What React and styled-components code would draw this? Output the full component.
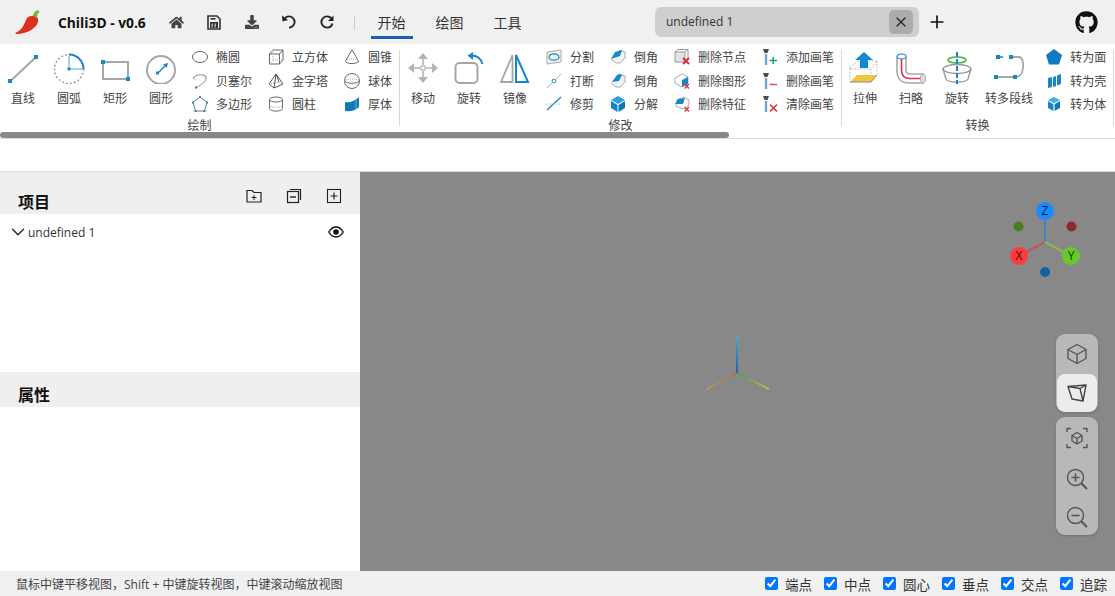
import React from "react";
import styled, { createGlobalStyle } from "styled-components";
import { FaGithub, FaHome, FaDownload } from "react-icons/fa";
import { X, Plus, ChevronDown } from "lucide-react";

const BLUE = "#1688c9";
const GREY = "#a6a6a6";
const DARK = "#555";

const GlobalStyle = createGlobalStyle`
  html, body {
    margin: 0;
    height: 100%;
    overflow: hidden;
  }
  body {
    font-family: "Open Sans", "Noto Sans CJK SC", sans-serif;
    color: #333;
    font-size: 12px;
  }
`;

const Page = styled.div`
  width: 1115px;
  height: 596px;
  display: flex;
  flex-direction: column;
  background: #fff;
`;

const TitleBar = styled.header`
  height: 44px;
  flex: none;
  display: flex;
  align-items: center;
  background: #f0f0f0;
`;

const TitleLeft = styled.div`
  flex: 0 0 655px;
  height: 100%;
  display: flex;
  align-items: center;
  padding-left: 14px;
  box-sizing: border-box;
`;

const AppName = styled.span`
  margin-left: 18px;
  width: 100px;
  font-size: 13.8px;
  font-weight: 700;
  color: #111;
  white-space: nowrap;
`;

const ToolButton = styled.div`
  width: 37.5px;
  height: 20px;
  display: flex;
  align-items: center;
  justify-content: center;
  color: #444;
`;

const VBar = styled.div`
  width: 1px;
  height: 15px;
  margin: 0 16px 0 8px;
  background: #ccc;
`;

const Tab = styled.div`
  width: 42px;
  height: 39px;
  box-sizing: border-box;
  margin-right: 16px;
  padding-top: 8px;
  align-self: flex-start;
  display: flex;
  align-items: center;
  justify-content: center;
  font-size: 14px;
  color: #333;
  border-bottom: 3px solid ${(p) => (p.$active ? "#1a5fb4" : "transparent")};
`;

const DocTab = styled.div`
  width: 264px;
  height: 30px;
  margin-top: -1px;
  box-sizing: border-box;
  padding: 0 6px 0 11px;
  display: flex;
  align-items: center;
  justify-content: space-between;
  background: #cfcfcf;
  border-radius: 6px;
  font-size: 12px;
  color: #333;
`;

const DocClose = styled.div`
  width: 24px;
  height: 24px;
  display: flex;
  align-items: center;
  justify-content: center;
  border-radius: 5px;
  background: #acacac;
  color: #222;
`;

const NewDoc = styled.div`
  margin-left: 8px;
  width: 20px;
  display: flex;
  justify-content: center;
  color: #111;
`;

const GithubLink = styled.div`
  margin-left: auto;
  margin-right: 17px;
  display: flex;
  color: #111;
`;

const Ribbon = styled.section`
  height: 86.5px;
  flex: none;
  padding-top: 1.5px;
  display: flex;
  align-items: flex-start;
  overflow: hidden;
`;

const Group = styled.div`
  display: flex;
  flex-direction: column;
  flex: none;
`;

const GroupBody = styled.div`
  display: flex;
  height: 70.5px;
  padding-right: 7px;
`;

const GroupLabel = styled.div`
  height: 16px;
  margin-top: 1.5px;
  line-height: 16px;
  text-align: center;
  color: #444;
`;

const GroupDivider = styled.div`
  width: 1px;
  height: 76px;
  margin-top: 4px;
  flex: none;
  background: #d8d8d8;
`;

const LargeButton = styled.div`
  min-width: 46px;
  box-sizing: border-box;
  padding: 6.5px 5px 0;
  display: flex;
  flex-direction: column;
  align-items: center;
  gap: 7px;
  svg {
    display: block;
  }
`;

const LargeLabel = styled.span`
  line-height: 16px;
  color: #444;
  white-space: nowrap;
`;

const SmallColumns = styled.div`
  display: flex;
  gap: 16px;
  margin-left: 8px;
`;

const SmallColumn = styled.div`
  display: flex;
  flex-direction: column;
`;

const SmallButton = styled.div`
  height: 23.5px;
  display: flex;
  align-items: center;
  gap: 8px;
  color: #444;
  white-space: nowrap;
  svg {
    flex: none;
  }
`;

const ScrollTrack = styled.div`
  height: 6px;
  flex: none;
  border-bottom: 1px solid #dcdcdc;
`;

const ScrollThumb = styled.div`
  width: 729px;
  height: 6px;
  border-radius: 3px;
  background: #888;
`;

const OptionBar = styled.div`
  height: 32px;
  flex: none;
  border-bottom: 1px solid #dcdcdc;
`;

const Main = styled.main`
  flex: 1;
  min-height: 0;
  display: flex;
`;

const SidePanel = styled.aside`
  width: 360px;
  flex: none;
  display: flex;
  flex-direction: column;
`;

const ProjectArea = styled.div`
  height: 200px;
  flex: none;
`;

const PanelHeader = styled.div`
  height: ${(p) => p.$height}px;
  box-sizing: border-box;
  padding: 0 18px 2px;
  display: flex;
  align-items: flex-end;
  background: #efefef;
`;

const PanelTitle = styled.h2`
  margin: 0;
  font-size: 16px;
  line-height: 20px;
  font-weight: 700;
  color: #111;
`;

const PanelTools = styled.div`
  margin-left: auto;
  align-self: flex-start;
  padding-top: 16px;
  display: flex;
  gap: 24px;
  svg {
    display: block;
  }
`;

const TreeRow = styled.div`
  height: 36px;
  padding: 0 16px 0 7px;
  display: flex;
  align-items: center;
  color: #333;
`;

const TreeName = styled.span`
  margin-left: -1px;
  flex: 1;
`;

const Viewport = styled.div`
  flex: 1;
  position: relative;
  background: #888;
  overflow: hidden;
`;

const Gizmo = styled.svg`
  position: absolute;
  right: 15px;
  top: 25px;
`;

const Axes = styled.svg`
  position: absolute;
  left: 340px;
  top: 160px;
`;

const NavStack = styled.div`
  position: absolute;
  right: 17px;
  top: 162px;
  display: flex;
  flex-direction: column;
  gap: 5px;
`;

const NavPanel = styled.div`
  width: 42px;
  border-radius: 9px;
  background: #b8b8b8;
  box-shadow: 0 1px 3px rgba(0, 0, 0, 0.18);
  display: flex;
  flex-direction: column;
  align-items: center;
  overflow: hidden;
`;

const NavButton = styled.div`
  width: 40px;
  height: ${(p) => p.$h}px;
  display: flex;
  align-items: center;
  justify-content: center;
  border-radius: 8px;
  background: ${(p) => (p.$active ? "#ececec" : "transparent")};
`;

const StatusBar = styled.footer`
  height: 25px;
  flex: none;
  display: flex;
  align-items: center;
  padding: 0 8px 0 16px;
  background: #f0f0f0;
  color: #444;
`;

const Hint = styled.span`
  font-size: 12px;
  flex: 1;
`;

const Snap = styled.label`
  display: flex;
  align-items: center;
  gap: 7px;
  margin-left: 12px;
  font-size: 13.5px;
  color: #333;
  input {
    margin: 0;
    width: 13px;
    height: 13px;
  }
`;

const Svg = ({ s = 16, children }) => (
  <svg width={s} height={s} viewBox={`0 0 ${s} ${s}`} fill="none">
    {children}
  </svg>
);

const Logo = () => (
  <svg width="26" height="26" viewBox="0 0 26 26">
    <path
      d="M18 7C22 6 25 9 24 13C22 20 12 25 3 25C1 25 1 24 2 23.5C8 21 10 16 12 11C13 8 15 7 18 7Z"
      fill="#d9301f"
    />
    <path d="M19 7C19 4 21 2 24 1L25.5 3C23.5 4 23 6 23 9Z" fill="#7fb23a" />
  </svg>
);

const SaveIcon = () => (
  <svg width="14" height="15" viewBox="0 0 14 15" fill="none">
    <path d="M1 1H10L13 4V14H1Z" stroke="#333" strokeWidth="1.6" />
    <rect x="3" y="7" width="8" height="6" fill="#333" />
    <rect x="4.6" y="8.5" width="1" height="4" fill="#f0f0f0" />
    <rect x="7.6" y="8.5" width="1" height="4" fill="#f0f0f0" />
    <rect x="3.5" y="3" width="5" height="1.6" fill="#333" />
  </svg>
);

const UndoIcon = () => (
  <svg width="16" height="16" viewBox="0 0 16 16" fill="none">
    <path d="M4 4.2C5 3 6.5 2.4 8 2.4C11.2 2.4 13.6 5 13.6 8C13.6 11 11.2 13.6 8 13.6" stroke="#222" strokeWidth="1.9" />
    <path d="M1 1.5L1.5 7.5L7 6Z" fill="#222" />
  </svg>
);

const RedoIcon = () => (
  <svg width="16" height="16" viewBox="0 0 16 16" fill="none">
    <path d="M12.4 4.4C11.4 3.1 9.8 2.4 8 2.4C4.8 2.4 2.4 5 2.4 8C2.4 11 4.8 13.6 8 13.6C10.6 13.6 12.8 11.8 13.4 9.4" stroke="#222" strokeWidth="1.9" />
    <path d="M14.5 1.5L14.5 7H9Z" fill="#222" />
  </svg>
);

// large ribbon icons
const large = {
  line: (
    <Svg s={32}>
      <line x1="3" y1="29.5" x2="29" y2="5" stroke={GREY} strokeWidth="2" />
      <rect x="1" y="27" width="4" height="4" fill={BLUE} />
      <rect x="27" y="3" width="4" height="4" fill={BLUE} />
    </Svg>
  ),
  arc: (
    <Svg s={32}>
      <circle cx="16" cy="17" r="14.5" stroke="#8d8d8d" strokeWidth="1.6" strokeDasharray="1.6 2.4" />
      <path d="M16 2.5A14.5 14.5 0 0 1 30.5 17" stroke={BLUE} strokeWidth="2" />
      <path d="M16 3V17H30" stroke="#8cc6e6" strokeWidth="1.6" />
      <rect x="14.5" y="15.5" width="3" height="3" fill={BLUE} />
    </Svg>
  ),
  rect: (
    <Svg s={32}>
      <rect x="4" y="10" width="25" height="17" stroke={GREY} strokeWidth="2" />
      <rect x="2" y="8" width="4" height="4" fill={BLUE} />
      <rect x="27" y="25" width="4" height="4" fill={BLUE} />
    </Svg>
  ),
  circle: (
    <Svg s={32}>
      <circle cx="16" cy="18" r="14" stroke={GREY} strokeWidth="2" />
      <line x1="13" y1="21" x2="20.5" y2="13.5" stroke={BLUE} strokeWidth="1.4" />
      <rect x="11" y="19.5" width="3" height="3" fill={BLUE} />
      <path d="M23 11L21.8 16L18 12.2Z" fill={BLUE} />
    </Svg>
  ),
  move: (
    <Svg s={32}>
      <path d="M16 1L21 7H11ZM16 31L11 25H21ZM1 16L7 11V21ZM31 16L25 21V11Z" fill="#b3b3b3" />
      <path d="M16 7V13M16 19V25M7 16H13M19 16H25" stroke="#c4c4c4" strokeWidth="2" />
      <rect x="14" y="14" width="4" height="4" stroke={GREY} />
    </Svg>
  ),
  rotate: (
    <Svg s={32}>
      <rect x="2.5" y="11" width="22" height="20" rx="4" stroke={GREY} strokeWidth="2" />
      <path d="M18 3.5C23.5 3 28 6.5 29.5 12" stroke={BLUE} strokeWidth="2" />
      <path d="M14.5 3.5L20 0V8Z" fill={BLUE} />
    </Svg>
  ),
  mirror: (
    <Svg s={32}>
      <path d="M13.5 3V30H2Z" stroke={GREY} strokeWidth="1.8" />
      <path d="M17 3V30H29Z" stroke={BLUE} strokeWidth="2" />
    </Svg>
  ),
  extrude: (
    <Svg s={32}>
      <path d="M1 15L9 9H28L22 17H1ZM1 17V30M22 17V30M28 9V22" stroke="#b5b5b5" strokeDasharray="1.5 1.5" />
      <path d="M1 30L8 23H28L22 30Z" fill="#f3c33c" />
      <path d="M1 30H22L28 23" stroke="#888" />
      <path d="M15 0L24 8H19V16H11V8H6Z" fill="#0d8ad6" />
    </Svg>
  ),
  sweep: (
    <Svg s={32}>
      <path d="M5 3C2 3 2 5 2 7V19C2 27 7 31 14 31H28V22H15C12 22 11 21 11 18V6C11 4 9 3 5 3Z" fill="#fff" stroke="#a9a9a9" strokeWidth="1.6" />
      <path d="M6.5 6V18C6.5 24 10 26.5 15 26.5H28" stroke="#e0324b" strokeWidth="1.6" />
      <ellipse cx="6.5" cy="4.5" rx="4.5" ry="2.5" fill="#fff" stroke={BLUE} strokeWidth="1.2" />
      <ellipse cx="28" cy="26.5" rx="2.5" ry="4.5" fill="#ddd" stroke="#a9a9a9" />
    </Svg>
  ),
  revolve: (
    <Svg s={32}>
      <ellipse cx="16" cy="17" rx="14" ry="4.5" stroke="#999" strokeWidth="1.4" />
      <path d="M2 17L5 27C7 31 25 31 27 27L30 17" stroke="#999" strokeWidth="1.4" />
      <ellipse cx="16" cy="8" rx="9" ry="3" stroke="#4db848" strokeWidth="1.6" />
      <path d="M16 0V32" stroke={BLUE} strokeWidth="2" strokeDasharray="5 2" />
    </Svg>
  ),
  polyline: (
    <Svg s={32}>
      <path d="M4 25H23M19 5H26C32 5 32 25 23 25" stroke={GREY} strokeWidth="1.8" />
      <path d="M6 5H10" stroke={BLUE} strokeWidth="1.6" />
      <rect x="3" y="3" width="4" height="4" fill={BLUE} />
      <rect x="16" y="3" width="4" height="4" fill={BLUE} />
      <rect x="1" y="23" width="4" height="4" fill={BLUE} />
      <rect x="20" y="23" width="4" height="4" fill={BLUE} />
    </Svg>
  ),
};

// small ribbon icons
const small = {
  ellipse: (
    <Svg>
      <ellipse cx="8" cy="8" rx="7.5" ry="5.5" stroke="#666" />
    </Svg>
  ),
  bezier: (
    <Svg>
      <path d="M1 5C5 0 15 1 14 6C13 10 7 13 4 15" stroke="#888" />
      <path d="M1 5L4 7M12 2L15 4" stroke={BLUE} strokeDasharray="1 1" />
      <rect x="3" y="13.5" width="2" height="2" fill={BLUE} />
    </Svg>
  ),
  polygon: (
    <Svg>
      <path d="M8 1L15 6.5L12.5 15H3.5L1 6.5Z" stroke="#777" />
      <g fill={BLUE}>
        <rect x="7" y="0" width="2" height="2" />
        <rect x="0" y="5.5" width="2" height="2" />
        <rect x="14" y="5.5" width="2" height="2" />
        <rect x="2.5" y="14" width="2" height="2" />
        <rect x="11.5" y="14" width="2" height="2" />
      </g>
    </Svg>
  ),
  cube: (
    <Svg>
      <path d="M1.5 5H11.5V15H1.5ZM1.5 5L5 1H15V11L11.5 15M11.5 5L15 1" stroke="#666" />
      <path d="M5 1V11H15M5 11L1.5 15" stroke="#aaa" strokeDasharray="1 1" />
    </Svg>
  ),
  pyramid: (
    <Svg>
      <path d="M8 1L1 11L6 15L15 11ZM8 1L6 15M8 1L11 9" stroke="#555" />
      <path d="M1 11L11 9L15 11" stroke="#999" strokeDasharray="1 1" />
    </Svg>
  ),
  cylinder: (
    <Svg>
      <ellipse cx="8" cy="3.5" rx="6.5" ry="2.5" stroke="#666" />
      <path d="M1.5 3.5V12.5C1.5 16 14.5 16 14.5 12.5V3.5" stroke="#666" />
      <path d="M1.5 9C1.5 12 14.5 12 14.5 9" stroke="#aaa" strokeDasharray="1 1" />
    </Svg>
  ),
  cone: (
    <Svg>
      <path d="M8 1L1.5 12M8 1L14.5 12" stroke="#666" />
      <path d="M1.5 12C1.5 15.5 14.5 15.5 14.5 12" stroke="#666" />
      <path d="M1.5 12C1.5 9.5 14.5 9.5 14.5 12" stroke="#aaa" strokeDasharray="1 1" />
    </Svg>
  ),
  sphere: (
    <Svg>
      <circle cx="8" cy="8" r="7.5" stroke="#666" />
      <path d="M.5 8C3 11 13 11 15.5 8" stroke="#666" />
      <path d="M.5 8C3 5.5 13 5.5 15.5 8" stroke="#aaa" strokeDasharray="1 1" />
    </Svg>
  ),
  thick: (
    <Svg>
      <path d="M1 6C6 7 11 5 15 1V11C11 15 6 16 1 15Z" fill="#1378b8" />
      <path d="M12 3.5V13" stroke="#63b1de" />
    </Svg>
  ),
  split: (
    <Svg>
      <path d="M1 3L15 1V13L1 15Z" fill="#f1f1f1" stroke="#aaa" />
      <ellipse cx="8" cy="8" rx="5" ry="3.2" stroke={BLUE} strokeWidth="1.2" />
    </Svg>
  ),
  break: (
    <Svg>
      <path d="M1 15L6 10M10 6L15 1" stroke="#b5b5b5" />
      <circle cx="8" cy="8" r="2" stroke={BLUE} />
    </Svg>
  ),
  trim: (
    <Svg>
      <path d="M1 14L15 1" stroke={BLUE} strokeWidth="1.4" />
      <path d="M0 8H15" stroke="#bbb" strokeDasharray="1.5 1" />
    </Svg>
  ),
  chamfer: (
    <Svg>
      <path d="M1 10L6 14H10L15 9V3L9 1" fill="#f1f1f1" stroke="#aaa" />
      <path d="M1 10L5 3L12 1L10 7Z" fill="#1688c9" />
    </Svg>
  ),
  fillet: (
    <Svg>
      <path d="M1 10L6 14H10L15 9V3L9 1" fill="#f1f1f1" stroke="#aaa" />
      <path d="M2 9L7 2C9 1 11 1 12 2L9 8Z" fill="#1688c9" />
    </Svg>
  ),
  explode: (
    <Svg>
      <path d="M8 0L15 4L8 8L1 4Z" fill="#2aa0dd" />
      <path d="M1 5L7.5 9V16L1 12Z" fill="#1184c4" />
      <path d="M15 5L8.5 9V16L15 12Z" fill="#0f78b6" />
    </Svg>
  ),
  delNode: (
    <Svg>
      <path d="M1 3H11V13H1Z" fill="#e4e4e4" stroke="#999" />
      <path d="M1 3L4 0.5H14V9L11 13M11 3L14 .5" stroke="#999" />
      <path d="M9 9L15 15M15 9L9 15" stroke="#d9342b" strokeWidth="2" />
    </Svg>
  ),
  delShape: (
    <Svg>
      <path d="M1 5L8 1L14 4V10L8 14L1 10Z" fill="#fff" stroke="#aaa" />
      <path d="M8 7L14 4V11L8 14Z" fill="#1688c9" />
      <path d="M10.5 11L15 15.5M15 11L10.5 15.5" stroke="#d9342b" strokeWidth="1.3" />
    </Svg>
  ),
  delFeature: (
    <Svg>
      <path d="M3 4L10 1L15 4V9L9 13L2 10Z" fill="#fff" stroke="#aaa" />
      <path d="M1 8L4 3L11 2L9 8Z" fill="#1688c9" />
      <path d="M10.5 11L15 15.5M15 11L10.5 15.5" stroke="#d9342b" strokeWidth="1.3" />
    </Svg>
  ),
  brushAdd: (
    <Svg>
      <path d="M1 0H7L5.5 4H2.5Z" fill="#4d4d4d" />
      <rect x="2.8" y="5" width="2.4" height="11" fill="#6da4d6" />
      <path d="M7.5 11.5H15M11.2 8V15" stroke="#16a085" strokeWidth="1.6" />
    </Svg>
  ),
  brushDel: (
    <Svg>
      <path d="M1 0H7L5.5 4H2.5Z" fill="#4d4d4d" />
      <rect x="2.8" y="5" width="2.4" height="11" fill="#6da4d6" />
      <path d="M7.5 11.5H15" stroke="#df5a68" strokeWidth="1.6" />
    </Svg>
  ),
  brushClear: (
    <Svg>
      <path d="M1 0H7L5.5 4H2.5Z" fill="#4d4d4d" />
      <rect x="2.8" y="5" width="2.4" height="11" fill="#6da4d6" />
      <path d="M8 8.5L15 15.5M15 8.5L8 15.5" stroke="#d9342b" strokeWidth="1.6" />
    </Svg>
  ),
  toFace: (
    <Svg>
      <path d="M8 0L16 6L13 15.5H3L0 6Z" fill="#1278c0" />
    </Svg>
  ),
  toShell: (
    <Svg>
      <path d="M2 5L6 4V14L2 15ZM7 4L10 3V13L7 14ZM11 2.5L15 1V11L11 12.5Z" fill="#1688c9" />
    </Svg>
  ),
  toSolid: (
    <Svg>
      <path d="M8 1L14 4L8 7.2L2 4Z" fill="#45b0e6" />
      <path d="M2 5L7.4 8.2V15L2 12Z" fill="#1688c9" />
      <path d="M14 5L8.6 8.2V15L14 12Z" fill="#0f78b6" />
    </Svg>
  ),
};

const groups = [
  {
    name: "绘制",
    big: [
      ["line", "直线"],
      ["arc", "圆弧"],
      ["rect", "矩形"],
      ["circle", "圆形"],
    ],
    cols: [
      [["ellipse", "椭圆"], ["bezier", "贝塞尔"], ["polygon", "多边形"]],
      [["cube", "立方体"], ["pyramid", "金字塔"], ["cylinder", "圆柱"]],
      [["cone", "圆锥"], ["sphere", "球体"], ["thick", "厚体"]],
    ],
  },
  {
    name: "修改",
    big: [
      ["move", "移动"],
      ["rotate", "旋转"],
      ["mirror", "镜像"],
    ],
    cols: [
      [["split", "分割"], ["break", "打断"], ["trim", "修剪"]],
      [["chamfer", "倒角"], ["fillet", "倒角"], ["explode", "分解"]],
      [["delNode", "删除节点"], ["delShape", "删除图形"], ["delFeature", "删除特征"]],
      [["brushAdd", "添加画笔"], ["brushDel", "删除画笔"], ["brushClear", "清除画笔"]],
    ],
  },
  {
    name: "转换",
    big: [
      ["extrude", "拉伸"],
      ["sweep", "扫略"],
      ["revolve", "旋转"],
      ["polyline", "转多段线"],
    ],
    cols: [[["toFace", "转为面"], ["toShell", "转为壳"], ["toSolid", "转为体"]]],
  },
];

const snaps = ["端点", "中点", "圆心", "垂点", "交点", "追踪"];

const NavIcon = ({ children }) => (
  <svg width="24" height="24" viewBox="0 0 24 24" fill="none" stroke={DARK} strokeWidth="1.4" strokeLinejoin="round">
    {children}
  </svg>
);

export default function App() {
  return (
    <Page>
      <GlobalStyle />
      <TitleBar>
        <TitleLeft>
          <Logo />
          <AppName>Chili3D - v0.6</AppName>
          <ToolButton>
            <FaHome size={15} />
          </ToolButton>
          <ToolButton>
            <SaveIcon />
          </ToolButton>
          <ToolButton>
            <FaDownload size={14} />
          </ToolButton>
          <ToolButton>
            <UndoIcon />
          </ToolButton>
          <ToolButton>
            <RedoIcon />
          </ToolButton>
          <VBar />
          <Tab $active>开始</Tab>
          <Tab>绘图</Tab>
          <Tab>工具</Tab>
        </TitleLeft>
        <DocTab>
          undefined 1
          <DocClose>
            <X size={16} strokeWidth={1.8} />
          </DocClose>
        </DocTab>
        <NewDoc>
          <Plus size={20} strokeWidth={2} />
        </NewDoc>
        <GithubLink>
          <FaGithub size={23} />
        </GithubLink>
      </TitleBar>

      <Ribbon>
        {groups.map((g) => (
          <React.Fragment key={g.name}>
            <Group>
              <GroupBody>
                {g.big.map(([icon, label]) => (
                  <LargeButton key={icon}>
                    {large[icon]}
                    <LargeLabel>{label}</LargeLabel>
                  </LargeButton>
                ))}
                <SmallColumns>
                  {g.cols.map((col) => (
                    <SmallColumn key={col[0][0]}>
                      {col.map(([icon, label]) => (
                        <SmallButton key={icon}>
                          {small[icon]}
                          {label}
                        </SmallButton>
                      ))}
                    </SmallColumn>
                  ))}
                </SmallColumns>
              </GroupBody>
              <GroupLabel>{g.name}</GroupLabel>
            </Group>
            <GroupDivider />
          </React.Fragment>
        ))}
      </Ribbon>
      <ScrollTrack>
        <ScrollThumb />
      </ScrollTrack>
      <OptionBar />

      <Main>
        <SidePanel>
          <ProjectArea>
            <PanelHeader $height={42}>
              <PanelTitle>项目</PanelTitle>
              <PanelTools>
                <Svg>
                  <path d="M1 2.5H6L8 4.5H15V14H1Z" stroke="#222" strokeWidth="1.2" />
                  <path d="M8 7V12M5.5 9.5H10.5" stroke="#222" />
                </Svg>
                <Svg>
                  <rect x="1.5" y="3.5" width="11" height="11" stroke="#222" strokeWidth="1.2" />
                  <path d="M4 1.5H14.5V12" stroke="#222" strokeWidth="1.2" />
                  <path d="M4 9H10" stroke="#222" strokeWidth="1.4" />
                </Svg>
                <Svg>
                  <rect x="1.5" y="1.5" width="13" height="13" stroke="#222" strokeWidth="1.1" />
                  <path d="M8 4.5V11.5M4.5 8H11.5" stroke="#222" strokeWidth="1.2" />
                </Svg>
              </PanelTools>
            </PanelHeader>
            <TreeRow>
              <ChevronDown size={22} strokeWidth={1.4} color="#222" />
              <TreeName>undefined 1</TreeName>
              <svg width="16" height="12" viewBox="0 0 16 12" fill="none">
                <path d="M.8 6C3 2.4 5.4 1 8 1C10.6 1 13 2.4 15.2 6C13 9.6 10.6 11 8 11C5.4 11 3 9.6 .8 6Z" stroke="#111" strokeWidth="1.4" />
                <circle cx="8" cy="6" r="2.8" fill="#111" />
              </svg>
            </TreeRow>
          </ProjectArea>
          <PanelHeader $height={35}>
            <PanelTitle>属性</PanelTitle>
          </PanelHeader>
        </SidePanel>

        <Viewport>
          <Axes width="80" height="70" viewBox="0 0 80 70" fill="none">
            <defs>
              <linearGradient id="az" gradientUnits="userSpaceOnUse" x1="37" y1="41" x2="37" y2="4">
                <stop offset="0" stopColor="#1a4fa0" />
                <stop offset="1" stopColor="#35b6dc" />
              </linearGradient>
              <linearGradient id="ax" gradientUnits="userSpaceOnUse" x1="37" y1="41" x2="7" y2="57">
                <stop offset="0" stopColor="#b0603e" />
                <stop offset="1" stopColor="#c8a83e" />
              </linearGradient>
              <linearGradient id="ay" gradientUnits="userSpaceOnUse" x1="37" y1="41" x2="69" y2="57">
                <stop offset="0" stopColor="#3f9e45" />
                <stop offset="1" stopColor="#b8d53a" />
              </linearGradient>
            </defs>
            <path d="M37 41V4" stroke="url(#az)" strokeWidth="1.6" />
            <path d="M37 41L7 57" stroke="url(#ax)" strokeWidth="1.4" />
            <path d="M37 41L69 57" stroke="url(#ay)" strokeWidth="1.4" />
          </Axes>

          <Gizmo width="100" height="90" viewBox="0 0 100 90" fontFamily="Open Sans, sans-serif" fontSize="12" textAnchor="middle">
            <circle cx="18.5" cy="29.5" r="5" fill="#47801a" />
            <circle cx="71.5" cy="29.5" r="5" fill="#8f2828" />
            <circle cx="45" cy="75" r="5" fill="#14609e" />
            <path d="M45 45V14" stroke="#3f86c4" strokeWidth="2" />
            <path d="M45 45L19 59" stroke="#b85a5a" strokeWidth="2" />
            <path d="M45 45L71 59" stroke="#88b85a" strokeWidth="2" />
            <circle cx="45" cy="14" r="9" fill="#1a8cff" />
            <circle cx="19" cy="59" r="9" fill="#ff3b3b" />
            <circle cx="71" cy="59" r="9" fill="#66c92a" />
            <text x="45" y="18" fill="#123">Z</text>
            <text x="19" y="63" fill="#411">X</text>
            <text x="71" y="63" fill="#232">Y</text>
          </Gizmo>

          <NavStack>
            <NavPanel>
              <NavButton $h={40}>
                <NavIcon>
                  <path d="M12 2.5L21 7.5V16.5L12 21.5L3 16.5V7.5Z" />
                  <path d="M3 7.5L12 12.5L21 7.5M12 12.5V21.5" />
                </NavIcon>
              </NavButton>
              <NavButton $h={38} $active>
                <NavIcon>
                  <path d="M3 5.5L21 4L18 20L7 18Z" stroke="#444" />
                  <path d="M3 5.5L15 7.5L21 4M15 7.5L18 20" stroke="#444" />
                </NavIcon>
              </NavButton>
            </NavPanel>
            <NavPanel>
              <NavButton $h={42}>
                <NavIcon>
                  <path d="M12 6.5L17 9.5V15L12 18L7 15V9.5Z" />
                  <path d="M7 9.5L12 12.5L17 9.5M12 12.5V18" />
                  <path d="M2 6V2.5H6M18 2.5H22V6M2 18V21.5H6M18 21.5H22V18" />
                </NavIcon>
              </NavButton>
              <NavButton $h={39}>
                <NavIcon>
                  <circle cx="10.5" cy="10.5" r="8" />
                  <path d="M16.5 16.5L22 22" strokeWidth="2.2" />
                  <path d="M10.5 6.5V14.5M6.5 10.5H14.5" strokeWidth="1.6" />
                </NavIcon>
              </NavButton>
              <NavButton $h={37}>
                <NavIcon>
                  <circle cx="10.5" cy="10.5" r="8" />
                  <path d="M16.5 16.5L22 22" strokeWidth="2.2" />
                  <path d="M6.5 10.5H14.5" strokeWidth="1.6" />
                </NavIcon>
              </NavButton>
            </NavPanel>
          </NavStack>
        </Viewport>
      </Main>

      <StatusBar>
        <Hint>鼠标中键平移视图，Shift + 中键旋转视图，中键滚动缩放视图</Hint>
        {snaps.map((s) => (
          <Snap key={s}>
            <input type="checkbox" defaultChecked />
            {s}
          </Snap>
        ))}
      </StatusBar>
    </Page>
  );
}
